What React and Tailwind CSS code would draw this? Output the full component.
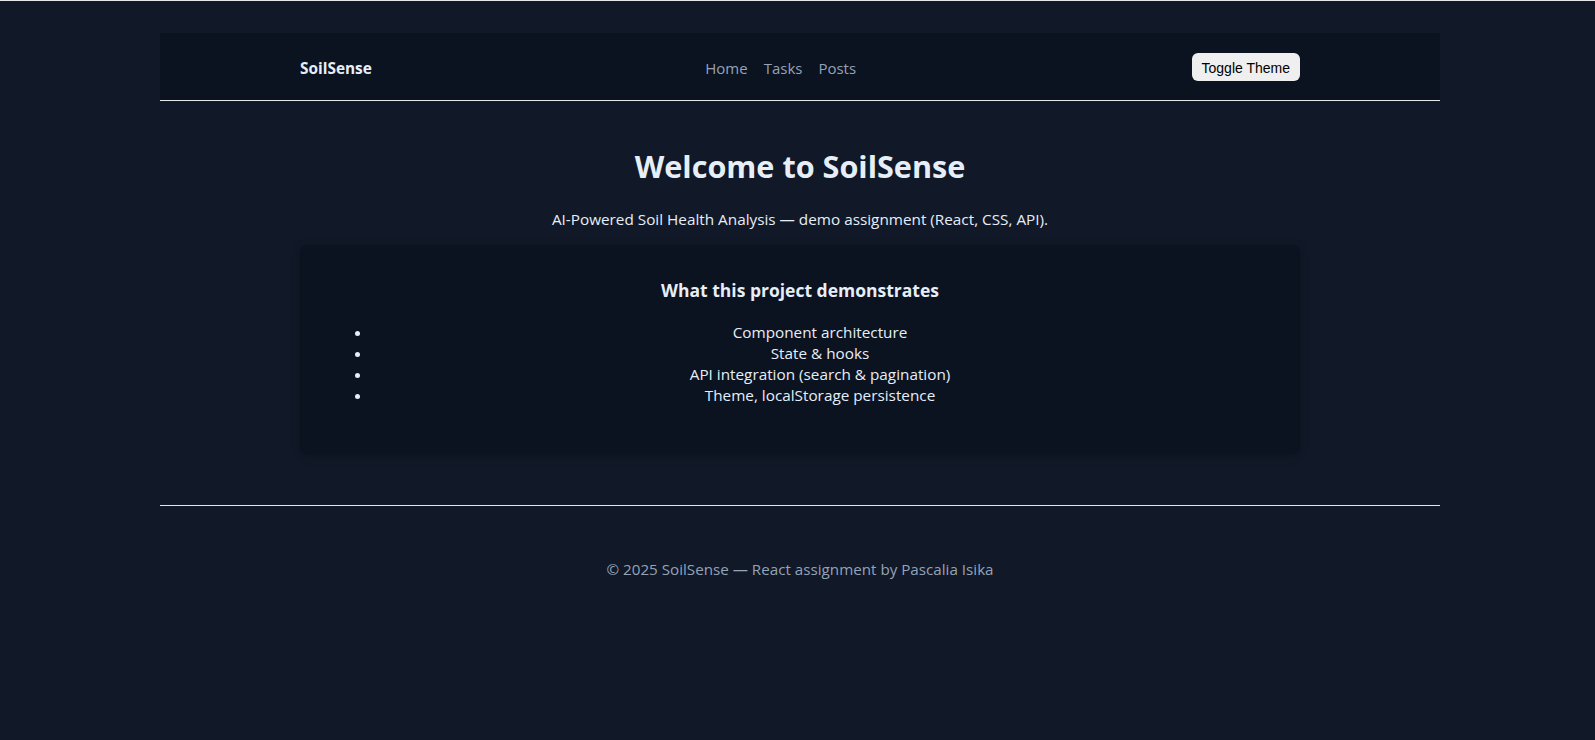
export default function App() {
  const items = [
    "Component architecture",
    "State & hooks",
    "API integration (search & pagination)",
    "Theme, localStorage persistence",
  ];
  return (
    <div className="min-h-screen bg-[#111827] border-t border-[#e5e7eb] font-['Open_Sans',sans-serif] text-[#e6eef8]">
      <div className="ml-[160px] w-[1280px] pt-8">
        <header className="h-[68px] bg-[#0b1220] border-b border-[#e5e7eb]">
          <div className="mx-auto w-[1000px] h-full flex items-center justify-between">
            <span className="font-bold text-[15.4px] leading-[21px] pt-[3px]">SoilSense</span>
            <nav className="flex gap-4 mr-[2px] text-[15px] leading-[21px] text-[#94a3b8] pt-[4px]">
              <a>Home</a>
              <a>Tasks</a>
              <a>Posts</a>
            </nav>
            <button className="h-[28px] px-[10px] pt-[3px] flex items-center rounded-md bg-[#efefef] text-black text-[14px] leading-[17px] font-['Liberation_Sans',Arial,sans-serif]">
              Toggle Theme
            </button>
          </div>
        </header>
        <main className="w-[1000px] mx-auto text-center pt-[45px]">
          <h1 className="text-[30.6px] leading-[40px] font-bold">Welcome to SoilSense</h1>
          <p className="mt-[23px] text-[15.3px] leading-[21px]">
            AI-Powered Soil Health Analysis — demo assignment (React, CSS, API).
          </p>
          <section className="mt-[15px] h-[209px] rounded-lg bg-[#0b1220] p-8 shadow-[0_2px_10px_rgba(0,0,0,0.25)]">
            <h3 className="mt-[1px] text-[17.5px] leading-[24px] font-bold">What this project demonstrates</h3>
            <ul className="mt-[20px] list-disc pl-10 text-[15.3px] leading-[21px]">
              {items.map((t) => (
                <li key={t}>{t}</li>
              ))}
            </ul>
          </section>
        </main>
        <footer className="mt-[51px] border-t border-[#e5e7eb] pt-[53px] text-center text-[15.2px] leading-[21px] text-[#94a3b8]">
          © 2025 SoilSense — React assignment by Pascalia Isika
        </footer>
      </div>
    </div>
  );
}
